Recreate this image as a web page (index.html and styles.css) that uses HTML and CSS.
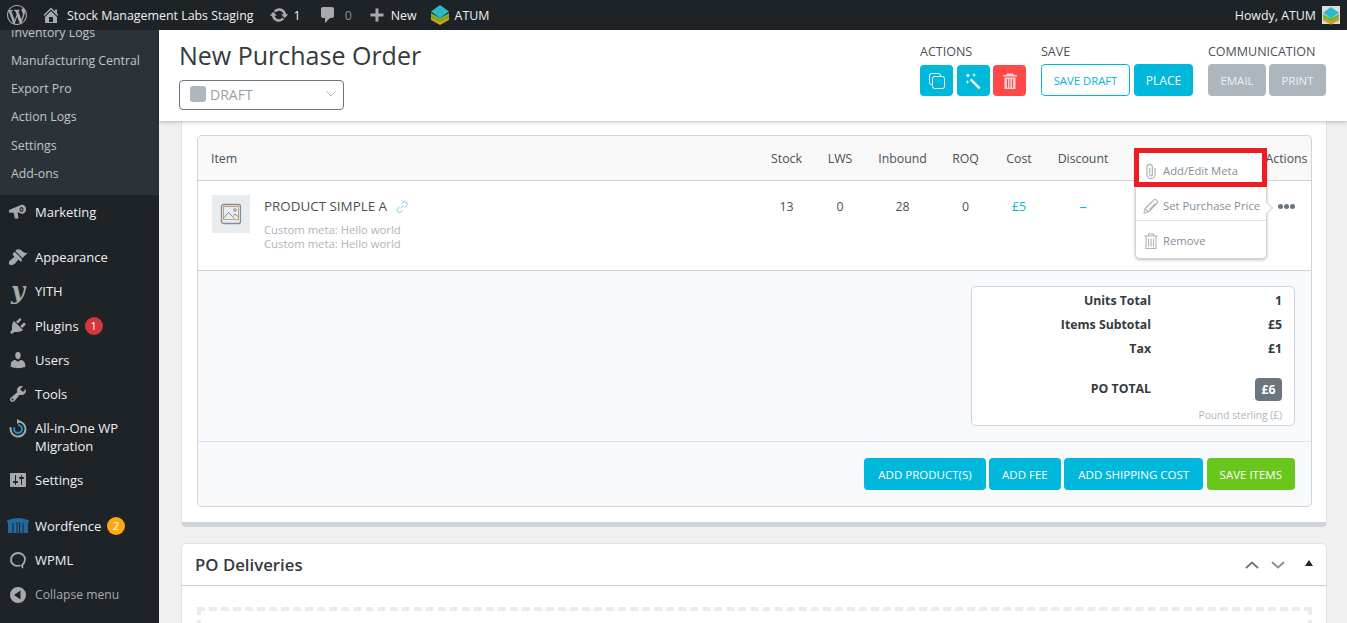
FILE: index.html
```html
<!DOCTYPE html>
<html lang="en">
<head>
    <meta charset="UTF-8">
    <meta name="viewport" content="width=device-width, initial-scale=1.0">
    <title>New Purchase Order</title>
    <link rel="stylesheet" href="styles.css">
</head>
<body>
    <div class="adminbar">
        <svg class="bar-logo" viewBox="0 0 20 20"><path d="M20 10c0-5.51-4.49-10-10-10C4.48 0 0 4.49 0 10c0 5.52 4.48 10 10 10 5.51 0 10-4.48 10-10zM7.78 15.37L4.37 6.22c.55-.02 1.17-.08 1.17-.08.5-.06.44-1.13-.06-1.11 0 0-1.45.11-2.37.11-.18 0-.37 0-.58-.01C4.12 2.69 6.87 1.11 10 1.11c2.33 0 4.45.87 6.05 2.34-.68-.11-1.65.39-1.65 1.58 0 .74.45 1.36.9 2.1.35.61.55 1.36.55 2.46 0 1.49-1.4 5-1.4 5l-3.03-8.37c.54-.02.82-.17.82-.17.5-.05.44-1.25-.06-1.22 0 0-1.44.12-2.38.12-.87 0-2.33-.12-2.33-.12-.5-.03-.56 1.2-.06 1.22l.92.08 1.26 3.41zM17.41 10c.24-.64.74-1.87.43-4.25.7 1.29 1.05 2.71 1.05 4.25 0 3.29-1.73 6.24-4.4 7.78.97-2.59 1.94-5.2 2.92-7.78zM6.1 18.09C3.12 16.65 1.11 13.53 1.11 10c0-1.3.23-2.48.72-3.59C3.25 10.3 4.67 14.2 6.1 18.09zm4.03-6.63l2.58 6.98c-.86.29-1.76.45-2.71.45-.79 0-1.57-.11-2.29-.33.81-2.38 1.62-4.74 2.42-7.1z"/></svg>
        <svg class="bar-icon home-icon" viewBox="0 0 20 20"><path d="M16 8.5l1.53 1.53-1.06 1.06L10 4.62l-6.47 6.47-1.06-1.06L10 2.5l4 4v-2h2v4zm-6-2.46l6 5.99V18H4v-5.97zM12 17v-5H8v5h4z"/></svg>
        <span class="site-name">Stock Management Labs Staging</span>
        <svg class="bar-icon update-icon" viewBox="0 0 20 20"><path d="M10.2 3.28c3.53 0 6.43 2.61 6.92 6h2.08l-3.5 4-3.5-4h2.32c-.45-1.97-2.21-3.45-4.32-3.45-1.45 0-2.73.71-3.54 1.78L4.95 5.66C6.23 4.2 8.11 3.28 10.2 3.28zm-.4 13.44c-3.52 0-6.43-2.61-6.92-6H.8l3.5-4c1.17 1.33 2.33 2.67 3.5 4H5.48c.45 1.97 2.21 3.45 4.32 3.45 1.45 0 2.73-.71 3.54-1.78l1.71 1.95c-1.28 1.46-3.15 2.38-5.25 2.38z"/></svg>
        <span class="update-count">1</span>
        <svg class="bar-icon comment-icon" viewBox="0 0 20 20"><path d="M5 2h9c1.1 0 2 .9 2 2v7c0 1.1-.9 2-2 2h-2l-5 5v-5H5c-1.1 0-2-.9-2-2V4c0-1.1.9-2 2-2z"/></svg>
        <span class="comment-count">0</span>
        <svg class="bar-icon plus-icon" viewBox="0 0 20 20"><path d="M16.500 8.500v3h-5v5h-3v-5h-5v-3h5v-5h3v5z"/></svg>
        <span class="new-link">New</span>
        <svg class="atum-logo" viewBox="0 0 18 20"><path fill="#d39a1c" d="M0 11.500l9 5 9-5v3.500l-9 5-9-5z"/><path fill="#6fb52c" d="M0 8l9 5 9-5v3.500l-9 5-9-5z"/><path fill="#2db8c9" d="M9 0l9 6.500-9 6.500-9-6.500z"/></svg>
        <span class="atum-link">ATUM</span>
        <span class="howdy">Howdy, ATUM</span>
        <span class="avatar"><svg viewBox="0 0 18 20"><path fill="#d39a1c" d="M0 11.500l9 5 9-5v3.500l-9 5-9-5z"/><path fill="#6fb52c" d="M0 8l9 5 9-5v3.500l-9 5-9-5z"/><path fill="#2db8c9" d="M9 0l9 6.500-9 6.500-9-6.500z"/></svg></span>
    </div>

    <div class="layout">
        <nav class="sidebar">
            <ul class="submenu">
                <li>Inventory Logs</li>
                <li>Manufacturing Central</li>
                <li>Export Pro</li>
                <li>Action Logs</li>
                <li>Settings</li>
                <li>Add-ons</li>
            </ul>
            <ul class="menu">
                <li>
                    <svg class="menu-icon" viewBox="0 0 20 20"><path d="M1 8l12-5c2.500-1 5 1 5 4.200s-2.500 5.200-5 4.200l-3-1.200-.4 1 .9 5.300H6.800L6 11.200l-1.200-.5L1 10.500zM13.500 5c-1.200 0-2 1-2 2.400s.8 2.400 2 2.400 2-1 2-2.400-.8-2.400-2-2.400zm0 1.400c.6 0 1 .4 1 1s-.4 1-1 1-1-.4-1-1 .4-1 1-1z"/></svg>
                    Marketing
                </li>
                <li class="sep">
                    <svg class="menu-icon" viewBox="0 0 20 20"><path d="M14.48 11.060L7.410 3.990l1.500-1.500c.5-.56 2.300-.47 3.510.32 1.210.8 1.430 1.280 2.910 2.100 1.180.64 2.450 1.260 4.450.85zm-.71.71L6.700 4.700 4.930 6.470c-.39.39-.39 1.020 0 1.410l1.060 1.060c.39.39.39 1.030 0 1.420-.6.6-1.430 1.110-2.210 1.690-.35.26-.7.53-1.010.84C1.430 13.230 0 16 1.560 17.560s4.330.13 5.680-1.210c.31-.31.58-.66.84-1.010.58-.78 1.090-1.610 1.690-2.210.39-.39 1.020-.39 1.410 0l1.060 1.060c.39.39 1.020.39 1.410 0z"/></svg>
                    Appearance
                </li>
                <li class="yith-row"><span class="yith-icon">y</span>YITH</li>
                <li>
                    <svg class="menu-icon" viewBox="0 0 20 20"><path d="M13.110 4.360L9.870 7.600 8 5.730l3.240-3.240c.35-.34 1.050-.2 1.560.32.52.51.66 1.210.31 1.550zm-8 1.770l.91-1.120 9.010 9.010-1.190.84c-.71.71-2.630 1.160-3.820 1.160H6.140L4.900 17.260c-.59.59-1.540.59-2.120 0-.59-.58-.59-1.530 0-2.120l1.240-1.240v-3.880c0-1.130.4-3.190 1.090-3.890zm7.260 3.970l3.240-3.240c.34-.35 1.040-.21 1.550.31.52.51.66 1.210.31 1.550l-3.240 3.250z"/></svg>
                    Plugins <span class="count count-red">1</span>
                </li>
                <li>
                    <svg class="menu-icon" viewBox="0 0 20 20"><path d="M10 9.250c-2.270 0-2.730-3.440-2.730-3.440C7 4.020 7.820 2 9.970 2c2.160 0 2.980 2.020 2.710 3.810 0 0-.41 3.440-2.680 3.440zm0 2.570L12.720 10c2.390 0 4.520 2.330 4.520 4.530v2.490s-3.650 1.130-7.240 1.130c-3.650 0-7.240-1.130-7.240-1.130v-2.490c0-2.250 1.940-4.480 4.470-4.480z"/></svg>
                    Users
                </li>
                <li>
                    <svg class="menu-icon" viewBox="0 0 20 20"><path d="M16.680 9.770c-1.340 1.340-3.300 1.670-4.950.99l-5.410 6.520c-.99.99-2.590.99-3.580 0s-.99-2.590 0-3.570l6.520-5.420c-.68-1.650-.35-3.610.99-4.950 1.280-1.280 3.120-1.620 4.720-1.060l-2.890 2.890 2.820 2.820 2.860-2.870c.53 1.580.18 3.390-1.080 4.650zM3.810 16.210c.4.39 1.040.39 1.430 0 .4-.4.4-1.040 0-1.430-.39-.4-1.030-.4-1.430 0-.39.39-.39 1.030 0 1.430z"/></svg>
                    Tools
                </li>
                <li class="two-line">
                    <svg class="menu-icon aio-icon" viewBox="0 0 20 20"><path fill="none" stroke="#a7aaad" stroke-width="2" d="M10 2.500a7.500 7.500 0 1 1-7.300 5.800"/><path fill="none" stroke="#2a8fc4" stroke-width="2" d="M10 6a4 4 0 1 1-3.600 2.300"/><path fill="#a7aaad" d="M9 0l4 2.500L9 5z"/></svg>
                    <span>All-in-One WP Migration</span>
                </li>
                <li>
                    <svg class="menu-icon" viewBox="0 0 20 20"><path fill-rule="evenodd" d="M18 16V4c0-.55-.45-1-1-1H3c-.55 0-1 .45-1 1v12c0 .55.45 1 1 1h14c.55 0 1-.45 1-1zM8 11h1c.55 0 1 .45 1 1s-.45 1-1 1H8v1.500c0 .28-.22.5-.5.5s-.5-.22-.5-.5V13H6c-.55 0-1-.45-1-1s.45-1 1-1h1V5.500c0-.28.22-.5.5-.5s.5.22.5.5V11zm5-2h-1c-.55 0-1-.45-1-1s.45-1 1-1h1V5.500c0-.28.22-.5.5-.5s.5.22.5.5V7h1c.55 0 1 .45 1 1s-.45 1-1 1h-1v5.500c0 .28-.22.5-.5.5s-.5-.22-.5-.5V9z"/></svg>
                    Settings
                </li>
                <li class="sep sep-wide">
                    <svg class="menu-icon wf-icon" viewBox="0 0 22 20"><path fill="#1f6b9e" d="M0 4.500C7 1 15 1 22 4.500V6l-1 .5V17H1V6.500L0 6zM5.500 7v10h1V7zm4-1v11h1V6zm2.500 0v11h1V6zm3.500 1v10h1V7z" fill-rule="evenodd"/></svg>
                    Wordfence <span class="count count-amber">2</span>
                </li>
                <li>
                    <svg class="menu-icon" viewBox="0 0 20 20"><path fill="none" stroke="#a7aaad" stroke-width="1.800" d="M12.500 15.500C7 17 3 14 3 10s3-7 7-7 7 3 7 6.500c0 2.500-1.500 4.500-3 6 .5 1 1 1.500 0 2.500"/></svg>
                    WPML
                </li>
                <li class="collapse">
                    <svg class="menu-icon" viewBox="0 0 20 20"><path d="M10 2a8 8 0 1 0 0 16 8 8 0 0 0 0-16zm2.500 3.500v9L6 10z" fill-rule="evenodd"/></svg>
                    Collapse menu
                </li>
            </ul>
        </nav>

        <main class="main">
            <header class="po-header">
                <div class="po-title">
                    <h1>New Purchase Order</h1>
                    <div class="status-select">
                        <span class="status-dot"></span>
                        <span class="status-text">DRAFT</span>
                        <svg class="status-arrow" viewBox="0 0 10 6"><path d="M.5.5L5 5 9.500.5" fill="none" stroke="#adb5bd" stroke-width="1"/></svg>
                    </div>
                </div>
                <div class="po-groups">
                    <div class="po-group">
                        <div class="group-label">ACTIONS</div>
                        <div class="group-buttons group-icons">
                            <button class="btn btn-icon btn-blue">
                                <svg viewBox="0 0 18 18"><rect x="1.500" y="1.500" width="11" height="11" rx="2" fill="none" stroke="#fff"/><rect x="4.500" y="4.500" width="12" height="12" rx="2" fill="#00b8db" stroke="#fff"/></svg>
                            </button>
                            <button class="btn btn-icon btn-blue">
                                <svg viewBox="0 0 18 18"><path d="M7.500 6.500l9 9-1.700 1.700-9-9z" fill="#fff"/><path d="M4 1l.8 1.700L6.500 3.500l-1.700.8L4 6l-.8-1.700L1.500 3.500l1.700-.8zM10 1l.6 1.400L12 3l-1.400.6L10 5l-.6-1.400L8 3l1.400-.6zM3.500 8l.6 1.400 1.400.6-1.400.6-.6 1.400-.6-1.400L1.500 10l1.400-.6z" fill="#fff"/></svg>
                            </button>
                            <button class="btn btn-icon btn-red">
                                <svg viewBox="0 0 18 18"><path d="M6 1.500h6l1 1.500h3v1.500H2V3h3zM3.500 5.500h11V17h-11zM6 7v8.500h1V7zm2.500 0v8.500h1V7zM11 7v8.500h1V7z" fill="#fff" fill-rule="evenodd" opacity=".75"/></svg>
                            </button>
                        </div>
                    </div>
                    <div class="po-group">
                        <div class="group-label">SAVE</div>
                        <div class="group-buttons">
                            <button class="btn btn-outline btn-save">SAVE DRAFT</button>
                            <button class="btn btn-blue btn-place">PLACE</button>
                        </div>
                    </div>
                    <div class="po-group">
                        <div class="group-label">COMMUNICATION</div>
                        <div class="group-buttons">
                            <button class="btn btn-grey btn-email">EMAIL</button>
                            <button class="btn btn-grey btn-print">PRINT</button>
                        </div>
                    </div>
                </div>
            </header>

            <div class="content">
                <section class="card items-card">
                    <div class="items-box">
                        <div class="items-row items-head">
                            <div class="cell-item">Item</div>
                            <div class="cell">Stock</div>
                            <div class="cell">LWS</div>
                            <div class="cell">Inbound</div>
                            <div class="cell">ROQ</div>
                            <div class="cell">Cost</div>
                            <div class="cell">Discount</div>
                            <div class="cell"></div>
                            <div class="cell">Actions</div>
                        </div>
                        <div class="items-row items-product">
                            <div class="cell-item product-info">
                                <div class="thumb">
                                    <svg viewBox="0 0 22 22"><rect x="1.500" y="1.500" width="19" height="19" rx="2" fill="none" stroke="#868e96" stroke-width="1.300"/><rect x="3.500" y="3.500" width="15" height="13" fill="none" stroke="#c9a27a" stroke-width="1"/><path d="M3.500 15l5-5.500 6 6M13 12.500l2-1.500 3.500 3" fill="none" stroke="#868e96"/><circle cx="15" cy="7" r="1.300" fill="none" stroke="#868e96"/></svg>
                                </div>
                                <div>
                                    <div class="product-name">PRODUCT SIMPLE A
                                        <svg class="link-icon" viewBox="0 0 16 16"><path d="M6.500 9.500L9.500 6.500M7 4.500l2-2a2.800 2.800 0 0 1 4 4l-2 2M9 11.500l-2 2a2.800 2.800 0 0 1-4-4l2-2" fill="none" stroke="#5fcbe3" stroke-width="1"/></svg>
                                    </div>
                                    <div class="product-meta">Custom meta: Hello world</div>
                                    <div class="product-meta">Custom meta: Hello world</div>
                                </div>
                            </div>
                            <div class="cell">13</div>
                            <div class="cell">0</div>
                            <div class="cell">28</div>
                            <div class="cell">0</div>
                            <div class="cell cell-blue">£5</div>
                            <div class="cell cell-blue cell-dash">–</div>
                            <div class="cell"></div>
                            <div class="cell cell-dots"><span class="dots"><i></i><i></i><i></i></span></div>
                        </div>
                        <div class="totals-area">
                            <div class="totals-box">
                                <div class="total-row"><span>Units Total</span><span>1</span></div>
                                <div class="total-row"><span>Items Subtotal</span><span>£5</span></div>
                                <div class="total-row"><span>Tax</span><span>£1</span></div>
                                <div class="total-row po-total"><span>PO TOTAL</span><span class="total-badge">£6</span></div>
                                <div class="currency">Pound sterling (£)</div>
                            </div>
                        </div>
                        <div class="items-actions">
                            <button class="btn btn-blue btn-add">ADD PRODUCT(S)</button>
                            <button class="btn btn-blue btn-add btn-tight">ADD FEE</button>
                            <button class="btn btn-blue btn-add">ADD SHIPPING COST</button>
                            <button class="btn btn-green btn-add btn-tight">SAVE ITEMS</button>
                        </div>

                        <div class="row-menu">
                            <div class="row-menu-item">
                                <svg viewBox="0 0 16 16"><path d="M12 5v6.500a4 4 0 0 1-8 0V4a2.700 2.700 0 0 1 5.400 0v7.500a1.300 1.300 0 0 1-2.600 0V5" fill="none" stroke="#adb5bd" stroke-width="1.200"/></svg>
                                Add/Edit Meta
                            </div>
                            <div class="row-menu-item">
                                <svg viewBox="0 0 16 16"><path d="M1 15l1-4.500L11 1.800a1.500 1.500 0 0 1 2.100 0l1.100 1.100a1.500 1.500 0 0 1 0 2.100L5.500 14zM2 10.500L5.500 14M4 9l6-6M6.500 11.500l6-6" fill="none" stroke="#adb5bd" stroke-width="1.100"/></svg>
                                Set Purchase Price
                            </div>
                            <div class="row-menu-item">
                                <svg viewBox="0 0 16 16"><path d="M5.500 2.500V1h5v1.500M1.500 3h13M3 3v12.500h10V3M5.500 5.500v8M8 5.500v8M10.500 5.500v8" fill="none" stroke="#adb5bd" stroke-width="1.100"/></svg>
                                Remove
                            </div>
                        </div>
                        <div class="highlight-box"></div>
                    </div>
                </section>

                <section class="card deliveries-card">
                    <div class="deliveries-head">
                        <h2>PO Deliveries</h2>
                        <div class="head-controls">
                            <svg class="chev" viewBox="0 0 14 8"><path d="M1 7l6-5.500L13 7" fill="none" stroke="#6c757d" stroke-width="1.800"/></svg>
                            <svg class="chev" viewBox="0 0 14 8"><path d="M1 1l6 5.500L13 1" fill="none" stroke="#868e96" stroke-width="1.800"/></svg>
                            <svg class="toggle" viewBox="0 0 8 6"><path d="M4 0l4 6H0z" fill="#1d2327"/></svg>
                        </div>
                    </div>
                    <div class="deliveries-body">
                        <div class="drop-zone"></div>
                    </div>
                </section>
            </div>
        </main>
    </div>
</body>
</html>
```

FILE: styles.css
```css
* {
    box-sizing: border-box;
}
html, body {
    margin: 0;
    height: 623px;
    overflow: hidden;
}
body {
    font-family: "Open Sans", sans-serif;
    font-size: 12px;
    color: #495057;
    background-color: #f0f0f1;
}
ul {
    list-style: none;
    margin: 0;
    padding: 0;
}

/* admin bar */
.adminbar {
    display: flex;
    align-items: center;
    height: 30px;
    background-color: #1d2327;
    color: #f0f0f1;
    font-size: 12.4px;
    padding-left: 7px;
    padding-right: 7px;
}
.adminbar svg {
    fill: #a7aaad;
    display: block;
}
.bar-logo {
    width: 20px;
    height: 20px;
}
.bar-icon {
    width: 20px;
    height: 20px;
}
.home-icon {
    margin-left: 14px;
}
.site-name {
    margin-left: 6px;
}
.update-icon {
    margin-left: 15px;
}
.update-count {
    margin-left: 5px;
}
.comment-icon {
    margin-left: 17px;
}
.comment-count {
    margin-left: 7px;
    color: #8c8f94;
}
.plus-icon {
    margin-left: 15px;
}
.new-link {
    margin-left: 4px;
}
.atum-logo {
    width: 18px;
    height: 20px;
    margin-left: 14px;
}
.atum-link {
    margin-left: 6px;
}
.howdy {
    margin-left: auto;
}
.avatar {
    width: 18px;
    height: 18px;
    margin-left: 6px;
    background-color: #ddd;
    padding: 1px;
}

/* sidebar */
.layout {
    display: flex;
    height: 593px;
}
.sidebar {
    width: 159px;
    flex-shrink: 0;
    background-color: #1d2327;
    overflow: hidden;
    color: #f0f0f1;
    font-size: 13px;
}
.submenu {
    background-color: #2c3338;
    color: #c3c4c7;
    font-size: 12.3px;
    margin-top: -11.2px;
    padding-bottom: 7.2px;
}
.submenu li {
    height: 28.2px;
    line-height: 28.2px;
    padding-left: 11px;
}
.menu li {
    display: flex;
    align-items: center;
    min-height: 34px;
    padding-left: 8px;
    line-height: 18px;
}
.menu li.sep {
    margin-top: 11px;
}
.menu li.sep-wide {
    margin-top: 12px;
}
.menu li.yith-row {
    margin-bottom: 1px;
}
.menu li.two-line {
    min-height: 52px;
}
.menu-icon {
    width: 20px;
    height: 20px;
    fill: #a7aaad;
    margin-right: 7px;
    flex-shrink: 0;
}
.aio-icon {
    align-self: flex-start;
    margin-top: 8px;
}
.wf-icon {
    width: 22px;
    margin-left: -1px;
    margin-right: 6px;
}
.yith-icon {
    width: 20px;
    margin-right: 7px;
    font-family: "DejaVu Serif", serif;
    font-style: italic;
    font-weight: bold;
    font-size: 24px;
    text-align: center;
    color: #a7aaad;
    line-height: 20px;
}
.menu li.collapse {
    color: #a7aaad;
    font-size: 12.2px;
    padding-top: 2px;
}
.count {
    display: inline-block;
    width: 18px;
    height: 18px;
    border-radius: 50%;
    margin-left: 6px;
    color: #fff;
    font-size: 11px;
    line-height: 18px;
    text-align: center;
}
.count-red {
    background-color: #d63638;
}
.count-amber {
    background-color: #fcaa0f;
}

/* po header */
.main {
    flex: 1;
    display: flex;
    flex-direction: column;
    min-width: 0;
}
.po-header {
    position: relative;
    z-index: 2;
    display: flex;
    justify-content: space-between;
    height: 91px;
    padding: 0 21px 0 20px;
    background-color: #fff;
    box-shadow: 0 1px 4px rgba(0, 0, 0, 0.25);
}
h1 {
    margin: 9px 0 0;
    font-size: 25px;
    font-weight: 400;
    line-height: 32px;
    color: #343a40;
}
.status-select {
    display: flex;
    align-items: center;
    width: 165px;
    height: 30px;
    margin-top: 9px;
    padding: 0 7px 2px 10px;
    border: 1px solid #6c757d;
    border-radius: 4px;
    color: #9aa0a6;
    font-size: 14px;
}
.status-dot {
    width: 16px;
    height: 16px;
    border-radius: 3px;
    background-color: #adb5bd;
    margin-right: 4px;
}
.status-arrow {
    width: 10px;
    height: 6px;
    margin-left: auto;
}
.po-groups {
    display: flex;
    gap: 15px;
    padding-top: 13px;
}
.group-label {
    font-size: 12.500px;
    line-height: 17px;
    color: #495057;
    margin-bottom: 4px;
}
.group-buttons {
    display: flex;
    gap: 3px;
}
.group-icons {
    gap: 3.5px;
}
.btn {
    border: none;
    border-radius: 4px;
    padding: 0;
    font-family: inherit;
    font-size: 11.500px;
    color: #fff;
    height: 32px;
    cursor: pointer;
}
.btn-blue {
    background-color: #00b8db;
}
.btn-red {
    background-color: #ff4848;
}
.btn-grey {
    background-color: #adb5bd;
    color: rgba(255, 255, 255, 0.8);
}
.btn-green {
    background-color: #69c61d;
}
.btn-outline {
    background-color: #fff;
    border: 1px solid #00b8db;
    color: #00b8db;
}
.btn-icon {
    width: 33px;
    height: 31px;
    margin-top: 1px;
    display: flex;
    align-items: center;
    justify-content: center;
}
.btn-icon svg {
    width: 18px;
    height: 18px;
}
.btn-save {
    width: 89px;
    margin-right: 1px;
    font-size: 11.300px;
}
.btn-place {
    width: 59px;
    font-size: 12px;
}
.btn-email {
    width: 58px;
}
.btn-print {
    width: 57px;
}

/* content */
.content {
    flex: 1;
    padding: 0 20px 0 22px;
    overflow: hidden;
}
.card {
    background-color: #fff;
    border-left: 1px solid #dee2e6;
    border-right: 1px solid #dee2e6;
}
.items-card {
    height: 406px;
    padding: 14px 14px 0 15px;
    border-bottom: 5px solid #ced4da;
    border-radius: 0 0 5px 5px;
}
.items-box {
    position: relative;
    height: 372px;
    border: 1px solid #ced4da;
    border-radius: 5px;
    background-color: #fff;
}
.items-row {
    display: grid;
    grid-template-columns: 562px 53px 54px 71px 55px 52px 76px 140px 51px;
    color: #495057;
    font-size: 12.300px;
}
.cell {
    text-align: center;
}
.items-head {
    height: 45px;
    line-height: 45px;
    background-color: #f8f8f8;
    border-bottom: 1px solid #ced4da;
    border-radius: 5px 5px 0 0;
}
.cell-item {
    padding-left: 13px;
}
.items-product {
    height: 90px;
    border-bottom: 1px solid #ced4da;
    padding-top: 17px;
    line-height: 17px;
}
.cell-blue {
    color: #00b8db;
}
.cell-dash {
    font-size: 15px;
}
.product-info {
    display: flex;
    gap: 14px;
    padding-left: 14px;
    margin-top: -3px;
}
.thumb {
    width: 38px;
    height: 38px;
    background-color: #e9ecef;
    padding: 8px;
}
.thumb svg {
    display: block;
    width: 22px;
    height: 22px;
}
.product-name {
    font-size: 13.400px;
    color: #495057;
    line-height: 18px;
    margin-top: 2px;
    margin-bottom: 8px;
}
.link-icon {
    width: 14px;
    height: 14px;
    vertical-align: -3px;
    margin-left: 4px;
}
.product-meta {
    font-size: 11.300px;
    line-height: 14px;
    color: #adb5bd;
}
.cell-dots {
    display: flex;
    justify-content: center;
    padding-top: 6px;
}
.dots {
    display: flex;
    gap: 1px;
}
.dots i {
    width: 5px;
    height: 5px;
    border-radius: 50%;
    background-color: #6c757d;
}
.totals-area {
    height: 171px;
    padding: 15px 16px 0 0;
    background-color: #f8f9fa;
    border-bottom: 1px solid #dee2e6;
    display: flex;
    justify-content: flex-end;
}
.totals-box {
    width: 324px;
    height: 140px;
    padding: 2px 12px 0 0;
    background-color: #fff;
    border: 1px solid #ced4da;
    border-radius: 5px;
}
.total-row {
    display: grid;
    grid-template-columns: 179px 1fr;
    height: 24px;
    line-height: 24px;
    font-size: 12.300px;
    font-weight: 700;
    color: #343a40;
    text-align: right;
}
.po-total {
    height: 24px;
    margin-top: 16px;
    align-items: center;
}
.total-badge {
    justify-self: end;
    width: 27px;
    height: 23px;
    line-height: 23px;
    text-align: center;
    border-radius: 4px;
    background-color: #6c757d;
    color: #fff;
}
.currency {
    margin-top: 7px;
    text-align: right;
    font-size: 10.200px;
    line-height: 14px;
    color: #adb5bd;
}
.items-actions {
    display: flex;
    justify-content: flex-end;
    gap: 3.500px;
    padding: 16px 16px 0 0;
    background-color: #f8f9fa;
    height: 64px;
    border-radius: 0 0 5px 5px;
}
.btn-add {
    padding: 0 14px;
}
.btn-tight {
    padding: 0 13px;
}

/* row menu */
.row-menu {
    position: absolute;
    top: 16px;
    left: 937px;
    width: 132px;
    background-color: #fff;
    border: 1px solid #ced4da;
    border-radius: 5px;
    box-shadow: 0 1px 3px rgba(0, 0, 0, 0.25);
}
.row-menu::after {
    content: "";
    position: absolute;
    top: 50px;
    right: -5px;
    width: 9px;
    height: 9px;
    background-color: #fff;
    border-top: 1px solid #ced4da;
    border-right: 1px solid #ced4da;
    transform: rotate(45deg);
}
.row-menu-item {
    display: flex;
    align-items: center;
    gap: 4px;
    height: 34px;
    padding: 2px 0 0 7px;
    font-size: 11.300px;
    color: #868e96;
    border-bottom: 1px solid #dee2e6;
}
.row-menu-item:nth-child(2) {
    padding-top: 4px;
}
.row-menu-item:last-child {
    height: 37px;
    padding-top: 2px;
    border-bottom: none;
}
.row-menu-item svg {
    width: 16px;
    height: 16px;
}
.highlight-box {
    position: absolute;
    top: 12px;
    left: 936px;
    width: 133px;
    height: 39px;
    border: 5px solid #ee1c25;
}

/* deliveries */
.deliveries-card {
    margin-top: 16px;
    border-top: 1px solid #dee2e6;
    border-radius: 5px 5px 0 0;
}
.deliveries-head {
    display: flex;
    align-items: center;
    justify-content: space-between;
    height: 42px;
    padding: 0 12px 0 13px;
    border-bottom: 1px solid #ccc;
}
h2 {
    margin: 0;
    font-size: 16.800px;
    font-weight: 600;
    color: #343a40;
}
.head-controls {
    display: flex;
    align-items: center;
}
.chev {
    width: 14px;
    height: 8px;
    margin-right: 12px;
}
.toggle {
    width: 8px;
    height: 6px;
    margin-left: 8px;
    margin-right: 1px;
    margin-bottom: 3px;
}
.deliveries-body {
    padding: 21px 14px 0 15px;
}
.drop-zone {
    height: 60px;
    border: 4px dashed #e9ecef;
}
```
